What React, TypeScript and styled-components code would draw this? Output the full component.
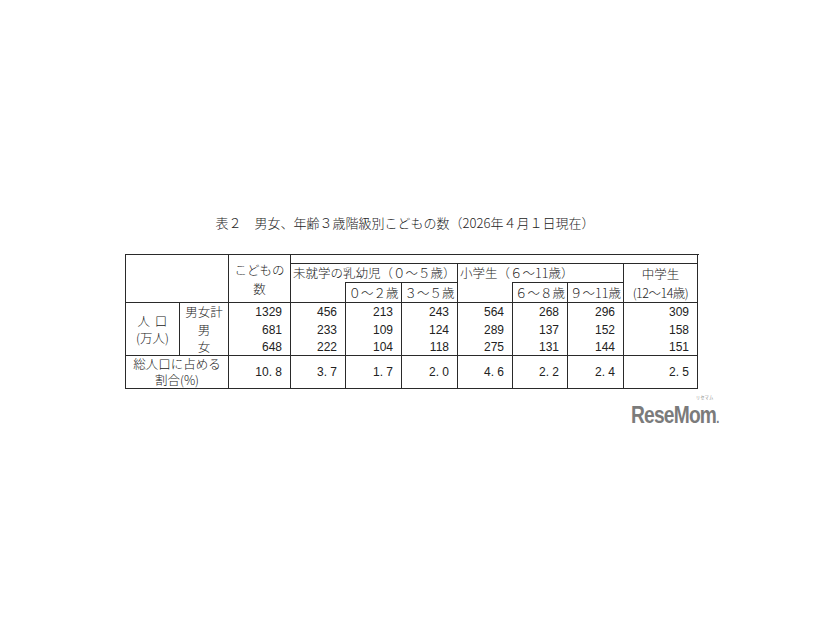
import React from 'react';
import styled, { createGlobalStyle } from 'styled-components';

const GlobalStyle = createGlobalStyle`
  html, body {
    margin: 0;
    padding: 0;
    background: #ffffff;
  }
  body {
    font-family: "Liberation Sans", "Noto Sans CJK JP", sans-serif;
    color: #1e1e1e;
  }
`;

const JP = `"Noto Sans CJK JP", "Liberation Sans", sans-serif`;
const NUM = `"Liberation Sans", "Noto Sans CJK JP", sans-serif`;
const LINE = '1px solid #2a2a2a';

type Row = { label: string; values: string[] };

const populationRows: Row[] = [
  { label: '男女計', values: ['1329', '456', '213', '243', '564', '268', '296', '309'] },
  { label: '男', values: ['681', '233', '109', '124', '289', '137', '152', '158'] },
  { label: '女', values: ['648', '222', '104', '118', '275', '131', '144', '151'] },
];

const ratioValues = ['10. 8', '3. 7', '1. 7', '2. 0', '4. 6', '2. 2', '2. 4', '2. 5'];

const colWidths = [54, 49, 62, 55, 56, 56, 55, 55, 56, 74];

const App: React.FC = () => {
  return (
    <Page>
      <GlobalStyle />
      <Sheet>
        <Title>表２　男女、年齢３歳階級別こどもの数（2026年４月１日現在）</Title>

        <Table>
          <colgroup>
            {colWidths.map((w, i) => (
              <col key={i} style={{ width: w }} />
            ))}
          </colgroup>
          <tbody>
            <tr style={{ height: 9 }}>
              <Cell rowSpan={3} colSpan={2} />
              <Cell rowSpan={3} $align="center" $lh={19}>
                こどもの
                <br />
                数
              </Cell>
              <Cell colSpan={8} />
            </tr>
            <tr style={{ height: 19 }}>
              <Cell colSpan={3} $align="left" $noBottom>
                未就学の乳幼児（０～５歳）
              </Cell>
              <Cell colSpan={3} $align="left" $noBottom>
                小学生（６～11歳）
              </Cell>
              <Cell rowSpan={2} $align="center" $lh={19}>
                中学生
                <br />
                <Narrow>(12～14歳)</Narrow>
              </Cell>
            </tr>
            <tr style={{ height: 20 }}>
              <Cell $noTop />
              <Cell $align="center">０～２歳</Cell>
              <Cell $align="center">３～５歳</Cell>
              <Cell $noTop />
              <Cell $align="center">６～８歳</Cell>
              <Cell $align="center">９～11歳</Cell>
            </tr>

            {populationRows.map((row, i) => {
              const first = i === 0;
              const last = i === populationRows.length - 1;
              return (
                <tr key={row.label} style={{ height: last ? 17 : 18 }}>
                  {first && (
                    <Cell rowSpan={3} $align="center" $lh={17}>
                      <Spaced>人 口</Spaced>
                      <br />
                      (万人)
                    </Cell>
                  )}
                  <Cell $align="center" $noTop={!first} $noBottom={!last}>
                    {row.label}
                  </Cell>
                  {row.values.map((v, j) => (
                    <Cell key={j} $align="right" $num $noTop={!first} $noBottom={!last}>
                      {v}
                    </Cell>
                  ))}
                </tr>
              );
            })}

            <tr style={{ height: 32 }}>
              <Cell colSpan={2} $align="center" $lh={16}>
                総人口に占める
                <br />
                割合(%)
              </Cell>
              {ratioValues.map((v, j) => (
                <Cell key={j} $align="right" $num>
                  {v}
                </Cell>
              ))}
            </tr>
          </tbody>
        </Table>

        <LogoRow>
          <Logo>
            <Kana>リセマム</Kana>
            ReseMom<Dot>.</Dot>
          </Logo>
        </LogoRow>
      </Sheet>
    </Page>
  );
};

const Page = styled.div`
  width: 826px;
  height: 620px;
  background: #ffffff;
  overflow: hidden;
`;

const Sheet = styled.div`
  display: flex;
  flex-direction: column;
  width: 572px;
  padding: 214px 0 0 125px;
`;

const Title = styled.div`
  font-family: ${JP};
  font-size: 13px;
  font-weight: 300;
  line-height: 18px;
  height: 18px;
  text-align: center;
  white-space: nowrap;
  margin-left: -12px;
  margin-bottom: 22px;
  color: #222222;
`;

const Table = styled.table`
  width: 572px;
  table-layout: fixed;
  border-collapse: collapse;
`;

const Cell = styled.td<{
  $align?: 'left' | 'center' | 'right';
  $noTop?: boolean;
  $noBottom?: boolean;
  $num?: boolean;
  $lh?: number;
}>`
  border: ${LINE};
  border-top: ${(p) => (p.$noTop ? 'none' : LINE)};
  border-bottom: ${(p) => (p.$noBottom ? 'none' : LINE)};
  padding: ${(p) => (p.$align === 'right' ? '0 8px 0 0' : p.$align === 'left' ? '0 0 0 2px' : '0')};
  text-align: ${(p) => p.$align || 'center'};
  vertical-align: middle;
  font-family: ${(p) => (p.$num ? NUM : JP)};
  font-size: ${(p) => (p.$num ? '12px' : '12.5px')};
  font-weight: ${(p) => (p.$num ? 400 : 300)};
  line-height: ${(p) => (p.$lh ? `${p.$lh}px` : '16px')};
  white-space: nowrap;
  color: #222222;
`;

const Spaced = styled.span`
  word-spacing: 2px;
`;

const Narrow = styled.span`
  letter-spacing: -0.5px;
`;

const LogoRow = styled.div`
  display: flex;
  justify-content: flex-end;
  margin-top: 14px;
  margin-right: -22px;
`;

const Logo = styled.div`
  position: relative;
  font-family: "Liberation Sans", Arial, sans-serif;
  font-weight: 700;
  font-size: 24px;
  line-height: 24px;
  letter-spacing: -1px;
  color: #7b7b7b;
  transform: scaleX(0.8);
  transform-origin: right center;
`;

const Kana = styled.span`
  position: absolute;
  right: 7px;
  top: -9px;
  font-family: "Noto Sans CJK JP", sans-serif;
  font-size: 5px;
  line-height: 5px;
  font-weight: 400;
  letter-spacing: 0.5px;
  color: #8a8a8a;
`;

const Dot = styled.span`
  font-size: 14px;
  letter-spacing: 0;
`;

export default App;
